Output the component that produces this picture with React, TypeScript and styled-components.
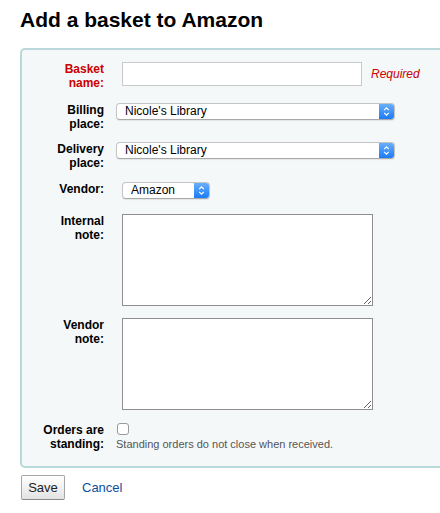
import React from "react";
import styled, { createGlobalStyle } from "styled-components";

const Global = createGlobalStyle`
  html, body { margin: 0; padding: 0; background: #ffffff; overflow: hidden; }
  body { font-family: "Liberation Sans", Arial, sans-serif; color: #000; }
`;

const Page = styled.div`
  width: 440px;
  height: 513px;
  overflow: hidden;
  box-sizing: border-box;
  padding: 8px 0 0 20px;
`;

const Title = styled.h1`
  margin: 0;
  font-size: 21px;
  line-height: 24px;
  font-weight: bold;
  color: #000;
`;

const Fieldset = styled.div`
  margin-top: 16px;
  width: 440px;
  box-sizing: border-box;
  border: 2px solid #b9d8d9;
  border-radius: 5px;
  background: #f4f8f9;
  padding: 12px 0 15px 0;
  display: flex;
  flex-direction: column;
`;

const Row = styled.div<{ $mb?: number }>`
  display: flex;
  align-items: flex-start;
  margin-bottom: ${(p) => p.$mb ?? 0}px;
`;

const Label = styled.label<{ $required?: boolean }>`
  width: 82px;
  flex: none;
  text-align: right;
  font-size: 12px;
  line-height: 14px;
  font-weight: bold;
  color: ${(p) => (p.$required ? "#cc0000" : "#000")};
`;

const Control = styled.div<{ $offset: number; $center?: boolean }>`
  margin-left: ${(p) => p.$offset}px;
  display: flex;
  align-items: ${(p) => (p.$center ? "center" : "flex-start")};
`;

const TextInput = styled.input`
  width: 240px;
  height: 24px;
  box-sizing: border-box;
  border: 1px solid #c9c9c9;
  background: #fff;
  margin: 0;
  padding: 2px 4px;
  font: 12px "Liberation Sans", Arial, sans-serif;
`;

const RequiredNote = styled.span`
  margin-left: 9px;
  font-size: 12px;
  font-style: italic;
  color: #cc0000;
`;

const SelectBox = styled.div<{ $width: number }>`
  width: ${(p) => p.$width}px;
  height: 17px;
  box-sizing: border-box;
  display: flex;
  align-items: stretch;
  background: #fff;
  border: 1px solid #c4c4c4;
  border-bottom-color: #a9a9a9;
  border-radius: 4px;
  box-shadow: 0 1px 1px rgba(0, 0, 0, 0.08);
  overflow: hidden;
`;

const SelectText = styled.span<{ $pad: number }>`
  flex: 1;
  padding-left: ${(p) => p.$pad}px;
  font-size: 12px;
  line-height: 15px;
  color: #000;
  white-space: nowrap;
`;

const SelectArrow = styled.span`
  width: 15px;
  flex: none;
  display: flex;
  align-items: center;
  justify-content: center;
  background: linear-gradient(#69aefa, #1b7cf8);
`;

const TextArea = styled.textarea`
  width: 251px;
  height: 92px;
  box-sizing: border-box;
  margin: 0;
  border: 1px solid #8e8e8e;
  background: #fff;
  resize: both;
  font: 12px "Liberation Sans", Arial, sans-serif;
`;

const StandingCol = styled.div`
  display: flex;
  flex-direction: column;
  align-items: flex-start;
`;

const CheckBox = styled.span`
  width: 12px;
  height: 12px;
  box-sizing: border-box;
  border: 1px solid #9a9a9a;
  border-radius: 3px;
  background: #fff;
  margin-left: 1px;
  margin-bottom: 2px;
`;

const Hint = styled.span`
  font-size: 11px;
  line-height: 14px;
  color: #555;
`;

const Actions = styled.div`
  margin-top: 7px;
  display: flex;
  align-items: center;
  gap: 17px;
  padding-left: 1px;
`;

const SaveButton = styled.button`
  width: 44px;
  height: 25px;
  box-sizing: border-box;
  margin: 0;
  padding: 0;
  border: 1px solid #a6a6a6;
  border-bottom-color: #8a8a8a;
  border-radius: 2px;
  background: linear-gradient(#ffffff, #e3e3e3);
  font: 13px "Liberation Sans", Arial, sans-serif;
  color: #222;
`;

const CancelLink = styled.a`
  font-size: 13px;
  color: #0b4f9e;
  text-decoration: none;
`;

const Arrows = () => (
  <svg width="7" height="11" viewBox="0 0 7 11">
    <path d="M1.2 4.2 L3.5 1.9 L5.8 4.2" fill="none" stroke="#fff" strokeWidth="1.2" />
    <path d="M1.2 6.8 L3.5 9.1 L5.8 6.8" fill="none" stroke="#fff" strokeWidth="1.2" />
  </svg>
);

const Select = ({ width, pad, value }: { width: number; pad: number; value: string }) => (
  <SelectBox $width={width}>
    <SelectText $pad={pad}>{value}</SelectText>
    <SelectArrow>
      <Arrows />
    </SelectArrow>
  </SelectBox>
);

export default function App() {
  return (
    <>
      <Global />
      <Page>
        <Title>Add a basket to Amazon</Title>
        <Fieldset>
          <Row $mb={13}>
            <Label $required>
              Basket
              <br />
              name:
            </Label>
            <Control $offset={18} $center>
              <TextInput />
              <RequiredNote>Required</RequiredNote>
            </Control>
          </Row>
          <Row $mb={11}>
            <Label>
              Billing
              <br />
              place:
            </Label>
            <Control $offset={12}>
              <Select width={279} pad={8} value="Nicole's Library" />
            </Control>
          </Row>
          <Row $mb={12}>
            <Label>
              Delivery
              <br />
              place:
            </Label>
            <Control $offset={12}>
              <Select width={279} pad={8} value="Nicole's Library" />
            </Control>
          </Row>
          <Row $mb={15}>
            <Label>Vendor:</Label>
            <Control $offset={18}>
              <Select width={88} pad={8} value="Amazon" />
            </Control>
          </Row>
          <Row $mb={12}>
            <Label>
              Internal
              <br />
              note:
            </Label>
            <Control $offset={18}>
              <TextArea />
            </Control>
          </Row>
          <Row $mb={13}>
            <Label>
              Vendor
              <br />
              note:
            </Label>
            <Control $offset={18}>
              <TextArea />
            </Control>
          </Row>
          <Row>
            <Label>
              Orders are
              <br />
              standing:
            </Label>
            <Control $offset={12}>
              <StandingCol>
                <CheckBox />
                <Hint>Standing orders do not close when received.</Hint>
              </StandingCol>
            </Control>
          </Row>
        </Fieldset>
        <Actions>
          <SaveButton>Save</SaveButton>
          <CancelLink href="#">Cancel</CancelLink>
        </Actions>
      </Page>
    </>
  );
}
